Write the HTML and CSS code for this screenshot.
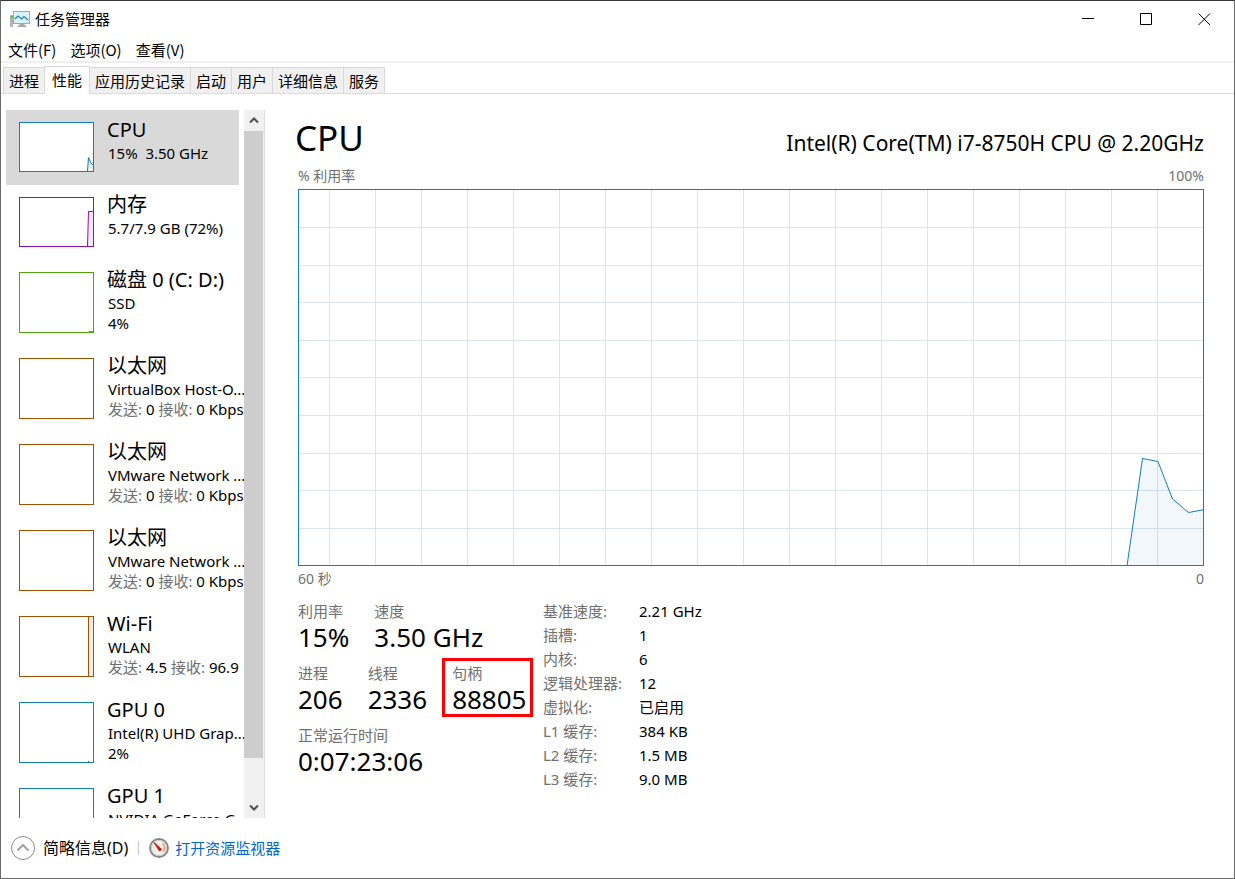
FILE: index.html
```html
<!DOCTYPE html>
<html lang="zh-CN">
<head>
  <meta charset="UTF-8">
  <title>任务管理器</title>
  <link rel="stylesheet" href="styles.css">
</head>
<body>

  <header class="titlebar">
    <svg class="app-icon" width="20" height="18" viewBox="0 0 20 18" aria-hidden="true">
      <rect x="0" y="5" width="3" height="12" fill="#b4b4b4"/>
      <rect x="1" y="6" width="2" height="2" fill="#3fd22c"/>
      <path d="M7 17 L10 14 H14 L17 17 Z" fill="#a9a9a9"/>
      <rect x="3.5" y="1.5" width="16" height="12" fill="#d9f3fc" stroke="#a6a6a6"/>
      <path d="M5 9 L8 6 L11.5 9 L14 6.5 L18 10" fill="none" stroke="#1c84b8" stroke-width="1.2"/>
    </svg>
    <h1>任务管理器</h1>
    <div class="window-buttons">
      <button type="button" aria-label="最小化">
        <svg width="13" height="13" viewBox="0 0 13 13"><path d="M0 5.5 H12"/></svg>
      </button>
      <button type="button" aria-label="最大化">
        <svg width="13" height="13" viewBox="0 0 13 13"><path d="M0.5 0.5 H11.5 V11.5 H0.5 Z"/></svg>
      </button>
      <button type="button" aria-label="关闭">
        <svg width="13" height="13" viewBox="0 0 13 13"><path d="M0.5 0.5 L12 12 M12 0.5 L0.5 12"/></svg>
      </button>
    </div>
  </header>

  <nav class="menu">
    <button type="button">文件(F)</button>
    <button type="button">选项(O)</button>
    <button type="button">查看(V)</button>
  </nav>

  <nav class="tabs">
    <button type="button">进程</button>
    <button type="button" class="active">性能</button>
    <button type="button">应用历史记录</button>
    <button type="button">启动</button>
    <button type="button">用户</button>
    <button type="button">详细信息</button>
    <button type="button">服务</button>
  </nav>

  <main class="content">

    <aside class="sidebar">
      <div class="devices">
        <button type="button" class="device short selected">
          <svg class="thumb blue" viewBox="0 0 75 50">
            <path class="area" d="M68.5 49 L69.5 35.5 L71.5 40 L72.5 42 L74.5 43 V49"/>
            <rect x="0.5" y="0.5" width="74" height="49"/>
          </svg>
          <span class="info">
            <span class="name">CPU</span>
            <span class="line">15%&nbsp; 3.50 GHz</span>
          </span>
        </button>
        <button type="button" class="device short">
          <svg class="thumb purple" viewBox="0 0 75 50">
            <path class="area" d="M68.5 49 L69.5 14.5 H74.5 V49"/>
            <rect x="0.5" y="0.5" width="74" height="49"/>
          </svg>
          <span class="info">
            <span class="name">内存</span>
            <span class="line">5.7/7.9 GB (72%)</span>
          </span>
        </button>
        <button type="button" class="device">
          <svg class="thumb green" viewBox="0 0 75 61">
            <path class="area" d="M70 59.5 H74"/>
            <rect x="0.5" y="0.5" width="74" height="60"/>
          </svg>
          <span class="info">
            <span class="name">磁盘 0 (C: D:)</span>
            <span class="line">SSD</span>
            <span class="line">4%</span>
          </span>
        </button>
        <button type="button" class="device">
          <svg class="thumb brown" viewBox="0 0 75 61"><rect x="0.5" y="0.5" width="74" height="60"/></svg>
          <span class="info">
            <span class="name">以太网</span>
            <span class="line">VirtualBox Host-O...</span>
            <span class="line"><i>发送:</i> 0 <i>接收:</i> 0 Kbps</span>
          </span>
        </button>
        <button type="button" class="device">
          <svg class="thumb brown" viewBox="0 0 75 61"><rect x="0.5" y="0.5" width="74" height="60"/></svg>
          <span class="info">
            <span class="name">以太网</span>
            <span class="line">VMware Network ...</span>
            <span class="line"><i>发送:</i> 0 <i>接收:</i> 0 Kbps</span>
          </span>
        </button>
        <button type="button" class="device">
          <svg class="thumb brown" viewBox="0 0 75 61"><rect x="0.5" y="0.5" width="74" height="60"/></svg>
          <span class="info">
            <span class="name">以太网</span>
            <span class="line">VMware Network ...</span>
            <span class="line"><i>发送:</i> 0 <i>接收:</i> 0 Kbps</span>
          </span>
        </button>
        <button type="button" class="device">
          <svg class="thumb brown" viewBox="0 0 75 61">
            <path class="area" d="M69.5 60 V0.5 H74.5 V60"/>
            <rect x="0.5" y="0.5" width="74" height="60"/>
          </svg>
          <span class="info">
            <span class="name">Wi-Fi</span>
            <span class="line">WLAN</span>
            <span class="line"><i>发送:</i> 4.5 <i>接收:</i> 96.9</span>
          </span>
        </button>
        <button type="button" class="device">
          <svg class="thumb blue" viewBox="0 0 75 61">
            <path class="area" d="M69 59.5 H70"/>
            <rect x="0.5" y="0.5" width="74" height="60"/>
          </svg>
          <span class="info">
            <span class="name">GPU 0</span>
            <span class="line">Intel(R) UHD Grap...</span>
            <span class="line">2%</span>
          </span>
        </button>
        <button type="button" class="device">
          <svg class="thumb blue" viewBox="0 0 75 61"><rect x="0.5" y="0.5" width="74" height="60"/></svg>
          <span class="info">
            <span class="name">GPU 1</span>
            <span class="line">NVIDIA GeForce G...</span>
          </span>
        </button>
      </div>
      <div class="scrollbar">
        <button type="button" aria-label="向上滚动">
          <svg width="10" height="7" viewBox="0 0 10 7"><path d="M1 5.5 L5 1.5 L9 5.5"/></svg>
        </button>
        <div class="scroll-thumb"></div>
        <button type="button" aria-label="向下滚动">
          <svg width="10" height="7" viewBox="0 0 10 7"><path d="M1 1.5 L5 5.5 L9 1.5"/></svg>
        </button>
      </div>
    </aside>

    <section class="details">
      <div class="heading">
        <h2>CPU</h2>
        <p>Intel(R) Core(TM) i7-8750H CPU @ 2.20GHz</p>
      </div>

      <div class="axis">
        <span>% 利用率</span>
        <span>100%</span>
      </div>
      <div class="chart">
        <svg viewBox="0 0 904 375" preserveAspectRatio="none" aria-label="CPU 利用率">
          <path class="grid" d="M30.5 0V375 M76.5 0V375 M122.5 0V375 M168.5 0V375 M214.5 0V375 M260.5 0V375 M306.5 0V375 M352.5 0V375 M398.5 0V375 M444.5 0V375 M490.5 0V375 M536.5 0V375 M582.5 0V375 M628.5 0V375 M674.5 0V375 M720.5 0V375 M766.5 0V375 M812.5 0V375 M858.5 0V375
            M0 37.5H904 M0 75.5H904 M0 112.5H904 M0 150.5H904 M0 187.5H904 M0 225.5H904 M0 263.5H904 M0 300.5H904 M0 338.5H904"/>
          <path class="curve" d="M828 376 L843.5 268.5 L859 271.5 L873.5 309 L889.5 322.5 L906 319.5 V377"/>
        </svg>
      </div>
      <div class="axis">
        <span>60 秒</span>
        <span>0</span>
      </div>

      <div class="stats">
        <div class="live">
          <dl>
            <div><dt>利用率</dt><dd>15%</dd></div>
            <div><dt>速度</dt><dd>3.50 GHz</dd></div>
          </dl>
          <dl>
            <div><dt>进程</dt><dd>206</dd></div>
            <div><dt>线程</dt><dd>2336</dd></div>
            <div class="marked"><dt>句柄</dt><dd>88805</dd></div>
          </dl>
          <dl>
            <div><dt>正常运行时间</dt><dd>0:07:23:06</dd></div>
          </dl>
        </div>
        <table class="specs">
          <tr><th scope="row">基准速度:</th><td>2.21 GHz</td></tr>
          <tr><th scope="row">插槽:</th><td>1</td></tr>
          <tr><th scope="row">内核:</th><td>6</td></tr>
          <tr><th scope="row">逻辑处理器:</th><td>12</td></tr>
          <tr><th scope="row">虚拟化:</th><td>已启用</td></tr>
          <tr><th scope="row">L1 缓存:</th><td>384 KB</td></tr>
          <tr><th scope="row">L2 缓存:</th><td>1.5 MB</td></tr>
          <tr><th scope="row">L3 缓存:</th><td>9.0 MB</td></tr>
        </table>
      </div>
    </section>
  </main>

  <footer class="footer">
    <button type="button">
      <svg width="24" height="24" viewBox="0 0 24 24" fill="none">
        <circle cx="12" cy="12" r="11.5" stroke="#8a8a8a"/>
        <path d="M6.5 14.5 L12 9 L17.5 14.5" stroke="#a0a0a0" stroke-width="2"/>
      </svg>
      简略信息(D)
    </button>
    <span class="separator"></span>
    <a href="#">
      <svg width="20" height="20" viewBox="0 0 20 20" fill="none">
        <circle cx="10" cy="10" r="9" fill="#f3f0ee" stroke="#858585" stroke-width="1.8"/>
        <circle cx="10" cy="10" r="7.6" stroke="#cfcac8" stroke-width="1"/>
        <path d="M13.5 5.5 A5.8 5.8 0 0 1 14 14" stroke="#ee9a6b" stroke-width="1.6"/>
        <path d="M5 4.5 L12.5 11.5 L10.5 13 Z" fill="#cf1414" stroke="#cf1414"/>
      </svg>
      打开资源监视器
    </a>
  </footer>

</body>
</html>
```
FILE: styles.css
```css
:root {
  --blue: #117dbb;
  --purple: #8b12ae;
  --green: #4da60c;
  --brown: #a74f01;
  --gray: #707070;
  --line: #dcdcdc;
}

* {
  box-sizing: border-box;
}

body {
  display: flex;
  flex-direction: column;
  height: 100vh;
  margin: 0;
  border: 1px solid #6b6b6b;
  border-top-color: #383838;
  background: #fff;
  color: #000;
  font: 15px/20px "Noto Sans", "Noto Sans CJK SC", sans-serif;
}

h1, h2, p, dl, dd {
  margin: 0;
  font-weight: normal;
}

button {
  padding: 0;
  border: none;
  background: none;
  color: inherit;
  font: inherit;
}

/* title bar and menu */
.titlebar {
  display: flex;
  align-items: center;
  height: 36px;
  padding-left: 9px;
}

.titlebar h1 {
  flex: 1;
  margin-left: 5px;
  font-size: 15px;
}

.window-buttons {
  display: flex;
  margin-right: 1px;
}

.window-buttons button {
  display: flex;
  align-items: center;
  justify-content: center;
  width: 58px;
  height: 36px;
}

.window-buttons path {
  fill: none;
  stroke: #000;
}

.menu {
  display: flex;
  gap: 14px;
  height: 26px;
  padding: 2px 7px 0;
  border-bottom: 2px solid #f0f0f0;
  font-family: "Noto Sans CJK SC", sans-serif;
}

/* tabs */
.tabs {
  display: flex;
  align-items: flex-end;
  height: 31px;
  padding-left: 2px;
  border-bottom: 1px solid var(--line);
}

.tabs button {
  height: 26px;
  margin-right: -1px;
  padding: 0 5px;
  border: 1px solid #d9d9d9;
  border-bottom: none;
  background: #f0f0f0;
}

.tabs .active {
  height: 28px;
  margin-bottom: -1px;
  padding: 0 7px 2px;
  background: #fff;
}

/* device list */
.content {
  display: flex;
  flex: 1;
  min-height: 0;
  padding: 16px 30px 0 5px;
}

.sidebar {
  display: flex;
  flex: none;
  width: 259px;
  border-right: 1px solid var(--line);
}

.devices {
  flex: 1;
  min-width: 0;
  overflow: hidden;
}

.device {
  display: flex;
  width: 100%;
  height: 86px;
  padding: 7px 0 0 13px;
  text-align: left;
}

.device.short {
  height: 75px;
}

.selected {
  width: calc(100% - 5px);
  background: #d9d9d9;
}

.thumb {
  flex: none;
  width: 75px;
  height: 61px;
  margin-top: 5px;
  fill: none;
  stroke: currentColor;
}

.short .thumb {
  height: 50px;
}

.selected .thumb {
  background: #fff;
}

.area {
  fill: currentColor;
  fill-opacity: 0.1;
}

.blue { color: var(--blue); }
.purple { color: var(--purple); }
.green { color: var(--green); }
.brown { color: var(--brown); }

.info {
  margin-left: 13px;
  white-space: nowrap;
}

.info span {
  display: block;
}

.name {
  font-size: 20px;
  line-height: 26px;
}

.line {
  padding-left: 1px;
  font-size: 15px;
}

.line i {
  color: var(--gray);
  font-style: normal;
}

.scrollbar {
  display: flex;
  flex: none;
  flex-direction: column;
  width: 20px;
  background: #f0f0f0;
}

.scrollbar button {
  display: flex;
  align-items: center;
  justify-content: center;
  width: 19px;
  height: 21px;
}

.scrollbar path {
  fill: none;
  stroke: #505050;
  stroke-width: 2;
}

.scroll-thumb {
  flex: none;
  width: 19px;
  height: calc(94% - 39px);
  margin-bottom: auto;
  background: #cdcdcd;
}

/* CPU details */
.details {
  display: flex;
  flex: 1;
  flex-direction: column;
  min-width: 0;
  padding-left: 33px;
}

.heading {
  display: flex;
  align-items: baseline;
  justify-content: space-between;
  height: 56px;
}

.heading h2 {
  margin-left: -3px;
  font-size: 35px;
  line-height: 55px;
}

.heading p {
  font-size: 21px;
}

.axis {
  display: flex;
  justify-content: space-between;
  height: 23px;
  color: var(--gray);
  font-size: 14px;
}

.chart {
  flex: 1;
  min-height: 0;
  border: 1px solid var(--blue);
}

.chart svg {
  display: block;
  width: 100%;
  height: 100%;
}

.grid {
  stroke: #d9e6ef;
}

.curve {
  fill: var(--blue);
  fill-opacity: 0.06;
  stroke: var(--blue);
}

.details .chart + .axis {
  height: 35px;
  padding-top: 3px;
}

.stats {
  display: flex;
  height: 217px;
}

.live {
  width: 245px;
}

.live dl {
  display: flex;
  gap: 25px;
  height: 62px;
}

.live dt {
  color: var(--gray);
}

.live dd {
  font-size: 26px;
  line-height: 32px;
}

.marked {
  position: relative;
}

/* red frame round the handle count */
.marked::after {
  content: "";
  position: absolute;
  inset: -5px -6px 8px -10px;
  border: 3px solid #f00;
}

.specs {
  align-self: flex-start;
  margin-top: -2px;
  border-collapse: collapse;
  line-height: 24px;
}

.specs th {
  width: 96px;
  padding: 0;
  color: var(--gray);
  font-weight: normal;
  text-align: left;
}

.specs td {
  padding: 0;
}

/* footer */
.footer {
  display: flex;
  flex: none;
  align-items: center;
  gap: 10px;
  height: 60px;
  padding-left: 10px;
}

.footer button,
.footer a {
  display: flex;
  align-items: center;
  gap: 8px;
}

.footer button {
  font-size: 16px;
}

.separator {
  width: 1px;
  height: 14px;
  background: #c8c8c8;
}

.footer a {
  gap: 6px;
  color: #0066cc;
  text-decoration: none;
}
```
